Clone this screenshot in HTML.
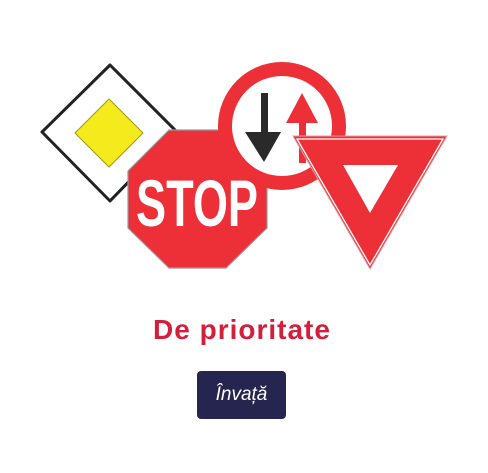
<!DOCTYPE html>
<html><head><meta charset="utf-8"><style>
body{margin:0;width:488px;height:473px;background:#fff;overflow:hidden;font-family:"Liberation Sans","DejaVu Sans",sans-serif}
h2{position:absolute;left:0;width:484px;top:314px;margin:0;text-align:center;color:#d21f3b;font-size:28px;font-weight:bold;letter-spacing:1px}
.btn{position:absolute;left:197px;top:371px;width:89px;height:48px;background:#26254f;border-radius:4px;color:#fff;font-style:italic;font-size:19px;line-height:48px;text-align:center}
</style></head><body>
<svg width="488" height="300" style="position:absolute;left:0;top:0">
<polygon points="110,65 177,132 110,201 42,132" fill="#fff" stroke="#222" stroke-width="3" stroke-linejoin="round"/>
<polygon points="109,99 143,133 109,167 75,133" fill="#f5eb1c" stroke="#a09a10" stroke-width="1"/>
<polygon points="169,130 226,130 267,171 267,228 226,268 169,268 128,228 128,171" fill="#ed2f38" stroke="#999" stroke-width="1.2"/>
<text x="197" y="226" text-anchor="middle" fill="#fff" font-family="Liberation Sans Narrow, Liberation Sans, sans-serif" font-weight="bold" font-size="66" textLength="122" lengthAdjust="spacingAndGlyphs">STOP</text>
<circle cx="282" cy="126" r="64" fill="#ed2f38"/>
<circle cx="282" cy="126" r="50" fill="#fff"/>
<rect x="261" y="93" width="7" height="42" fill="#2a2a2a"/>
<polygon points="245,132 281,132 264,162" fill="#2a2a2a"/>
<rect x="299" y="118" width="7" height="45" fill="#ed2f38"/>
<polygon points="286,123 318,123 302,93" fill="#ed2f38"/>
<polygon points="293,136 447,136 370,269" fill="#ed2f38" stroke="#e0a0a0" stroke-width="1"/>
<polygon points="297,139 443,139 370,265" fill="none" stroke="#fff" stroke-width="1.3"/>
<polygon points="343,165 398,165 370,213" fill="#fff"/>
</svg>
<h2>De prioritate</h2>
<div class="btn">Învață</div>
</body></html>
